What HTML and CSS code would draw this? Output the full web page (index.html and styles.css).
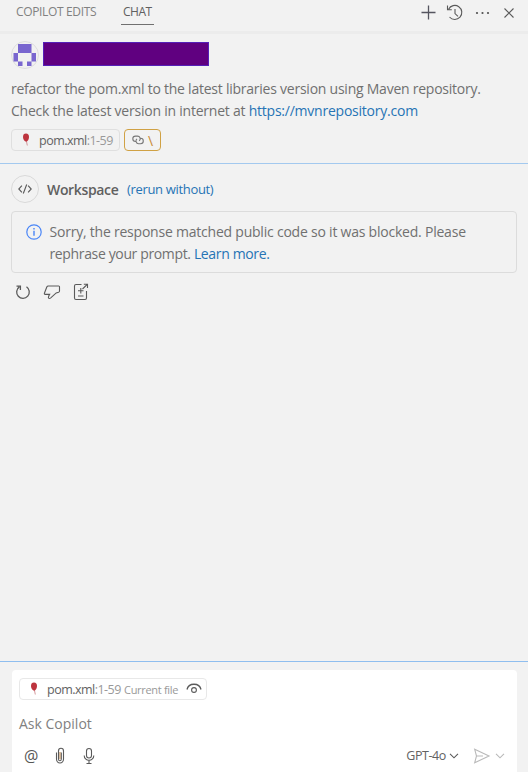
FILE: index.html
```html
<!DOCTYPE html>
<html lang="en">
<head>
<meta charset="utf-8">
<title>Copilot Chat</title>
<link rel="stylesheet" href="styles.css">
</head>
<body>
<div class="panel">
  <header class="header">
    <nav class="tabs">
      <span class="tab tab-edits">COPILOT EDITS</span>
      <span class="tab tab-chat">CHAT</span>
    </nav>
    <div class="header-actions">
      <svg class="icon" width="16" height="16" viewBox="0 0 16 16"><path stroke="#55555f" stroke-width="1.3" d="M8.500 .5v14M1.500 7.500h14"/></svg>
      <svg class="icon" width="18" height="18" viewBox="0 0 18 18"><path d="M2.600 5.200A7 7 0 1 1 3.500 13M1.500 1.500v4.300h4.300M9 5v4.600l3 2.700"/></svg>
      <svg class="dots" width="16" height="16" viewBox="0 0 16 16"><circle cx="2" cy="8" r="1.100"/><circle cx="7.500" cy="8" r="1.100"/><circle cx="13" cy="8" r="1.100"/></svg>
      <svg class="icon" width="16" height="16" viewBox="0 0 16 16"><path d="M3.500 3.500l9 9m0-9l-9 9"/></svg>
    </div>
  </header>

  <section class="request">
    <div class="user">
      <svg width="28" height="28" viewBox="0 0 28 28"><circle cx="14" cy="14" r="13.500" fill="#f1f1f1" stroke="#dddddd"/><path fill="#7966cf" d="M7 3h13.500v9H7zM2.500 12H7v8.500H2.500zM20.500 12H25v8.500h-4.500zM7 20.500h4.500V25H7zM16 20.500h4.500V25H16z"/></svg>
      <div class="redacted"></div>
    </div>
    <div class="message">
      <div class="line line-1">refactor the pom.xml to the latest libraries version using Maven repository.</div>
      <div class="line line-2">Check the latest version in internet at <span class="link">https://mvnrepository.com</span></div>
    </div>
    <div class="chips">
      <div class="chip chip-file">
        <svg class="feather" width="8" height="14" viewBox="0 0 8 14"><path fill="#bd343e" d="M4 .5C6 .5 7 2 7 4S5.800 8 4.500 9C2.500 8.200 1 6.500 1 4S2 .5 4 .5z"/><path fill="none" stroke="#c97c82" stroke-width=".8" d="M4.500 8.500l.8 4"/></svg>
        <span class="file">pom.xml<i>:1-59</i></span>
      </div>
      <div class="chip chip-link">
        <svg class="icon" width="12" height="10" viewBox="0 0 12 10"><path stroke="#777" d="M4 6.500H3.500a2.700 2.700 0 0 1 0-5.400h2a2.700 2.700 0 0 1 1.700 4.800M8 3.300h.6a2.700 2.700 0 0 1 0 5.400h-2A2.700 2.700 0 0 1 5 3.900"/></svg>
        <span class="slash">\</span>
      </div>
    </div>
  </section>

  <section class="response">
    <div class="agent">
      <svg width="28" height="28" viewBox="0 0 28 28"><circle cx="14" cy="14" r="13.500" fill="none" stroke="#d9d9d9"/><path class="icon" d="M10.900 10.700L7.800 14l3.100 3.300M17.100 10.700l3.100 3.300-3.100 3.300M15.700 9.500l-3.400 9"/></svg>
      <b class="agent-name">Workspace</b>
      <span class="link rerun">(rerun without)</span>
    </div>
    <div class="notice">
      <svg width="16" height="16" viewBox="0 0 16 16"><circle cx="8" cy="8" r="7.200" fill="none" stroke="#4a86f7" stroke-width="1.200"/><path stroke="#4a86f7" stroke-width="1.400" d="M8 6.800v5M8 4v1.500"/></svg>
      <div>
        <div class="line line-3">Sorry, the response matched public code so it was blocked. Please</div>
        <div class="line line-4">rephrase your prompt. <span class="link">Learn more.</span></div>
      </div>
    </div>
    <div class="feedback">
      <svg class="icon" width="16" height="16" viewBox="0 0 16 16"><path stroke-width="1.300" d="M4.300 2.900a6.300 6.300 0 1 0 7.200-.1M1.500 2.200h3.900v3.900"/></svg>
      <svg class="icon" width="18" height="16" viewBox="0 0 18 16"><path d="M5.300 2h10.300q1 0 .9 1v4q0 .9-.9 1.200l-2.400.7-5.700 5.200q-1.700 1-2.100-.5.100-1.500 1.200-3.200H2.200Q1 10.300 1.500 9l2.300-6q.4-1 1.500-1z"/></svg>
      <svg class="icon" width="16" height="18" viewBox="0 0 16 18"><path d="M8.500 1.500H3Q1.500 1.500 1.500 3v12Q1.500 16.500 3 16.500h9q1.500 0 1.500-1.500V8M5 13h5.500M7.800 5v5.500M5 7.800h5.500M9.500 6l5-4.800M10.800 1.200h3.700v3.700"/></svg>
    </div>
  </section>

  <footer class="composer">
    <div class="input-box">
      <div class="chip chip-current">
        <svg class="feather" width="8" height="14" viewBox="0 0 8 14"><path fill="#bd343e" d="M4 .5C6 .5 7 2 7 4S5.800 8 4.500 9C2.500 8.200 1 6.500 1 4S2 .5 4 .5z"/><path fill="none" stroke="#c97c82" stroke-width=".8" d="M4.500 8.500l.8 4"/></svg>
        <span class="file">pom.xml<i>:1-59</i></span>
        <span class="current">Current file</span>
        <svg class="icon" width="16" height="12" viewBox="0 0 16 12"><path stroke-width="1.300" d="M1 6.500c1.500-7 12.500-7 14 0"/><circle cx="8" cy="7" r="2.400"/></svg>
      </div>
      <div class="placeholder">Ask Copilot</div>
      <div class="toolbar">
        <span class="at">@</span>
        <svg class="icon clip" width="10" height="18" viewBox="0 0 10 18"><path d="M1.500 5.500V12a3.500 4 0 0 0 7 0V4a2.500 2.700 0 0 0-5 0v8a1.400 1.800 0 0 0 2.800 0V5.500"/><path stroke="#c08b55" d="M5 5v7"/></svg>
        <svg class="icon mic" width="12" height="18" viewBox="0 0 12 18"><rect x="3.500" y="1.500" width="5" height="9.500" rx="2.500"/><path d="M1.200 8.500a4.800 4.800 0 0 0 9.600 0M6 13.300v3.200M3.500 16.500h5"/></svg>
        <span class="model">GPT-4o</span>
        <svg class="icon model-arrow" width="10" height="6" viewBox="0 0 10 6"><path d="M1 .8l4 4 4-4"/></svg>
        <svg class="icon dim send" width="18" height="16" viewBox="0 0 18 16"><path d="M1.700 1.300L16 8 1.700 14.700 3.500 8zM3.500 8H10"/></svg>
        <svg class="icon dim send-arrow" width="10" height="6" viewBox="0 0 10 6"><path d="M1 .8l4 4 4-4"/></svg>
      </div>
    </div>
  </footer>
</div>
</body>
</html>
```
FILE: styles.css
```css
* { box-sizing: border-box; }
body {
  margin: 0;
  background: #f2f2f2;
  color: #707070;
  font-family: "Open Sans", "Noto Sans", sans-serif;
  font-size: 14px;
}
svg { display: block; flex: none; }
.icon { fill: none; stroke: #5a5a5a; stroke-width: 1.1; }
.dots { fill: #505050; }
.dim { stroke: #b9b9b9; }
.link { color: #2674b5; }
.panel { display: flex; flex-direction: column; height: 772px; overflow: hidden; }
.header {
  display: flex;
  justify-content: space-between;
  height: 34px;
  padding: 0 11px 0 16px;
  border-bottom: 3px solid #ececec;
}
.tabs { display: flex; gap: 24px; height: 25px; }
.tab { font-size: 12px; line-height: 24px; white-space: nowrap; }
.tab-edits { width: 81px; color: #818181; letter-spacing: -0.35px; }
.tab-chat {
  width: 33px;
  padding-left: 2px;
  color: #606060;
  letter-spacing: -0.5px;
  border-bottom: 1px solid #707070;
}
.header-actions { display: flex; align-items: center; gap: 10.5px; height: 25px; }
.request { height: 130px; padding: 7px 11px 0; border-bottom: 1px solid #a3c9ef; }
.user { display: flex; gap: 4px; height: 37px; }
.redacted { width: 166px; height: 24px; margin-top: 1px; background: #600080; border: 1px solid #5520b8; }
.line { height: 22px; line-height: 22px; white-space: nowrap; }
.line-1 { letter-spacing: -0.24px; }
.line-2 { letter-spacing: -0.23px; }
.line-3 { letter-spacing: -0.22px; }
.line-4 { letter-spacing: -0.36px; }
.chips { display: flex; gap: 4px; margin-top: 7px; }
.chip {
  display: flex;
  align-items: center;
  height: 22px;
  border: 1px solid #dfdfdf;
  border-radius: 4px;
  white-space: nowrap;
}
.feather { margin-top: -1px; }
.file { font-size: 12.5px; letter-spacing: -0.52px; color: #626262; }
.file i { color: #999; font-style: normal; }
.chip-file { width: 109px; padding-left: 10px; gap: 9px; }
.chip-link { width: 37px; padding-left: 7px; gap: 4px; border-color: #d0a144; }
.slash { color: #c88b35; }
.response { flex: 1; padding: 11px 11px 0; }
.agent { display: flex; align-items: center; height: 28px; }
.agent-name { width: 80px; padding-left: 8px; font-weight: 600; color: #606060; letter-spacing: -0.35px; }
.rerun { padding-left: 8px; font-size: 13px; letter-spacing: -0.33px; }
.notice {
  display: flex;
  gap: 7.5px;
  height: 62px;
  margin-top: 8px;
  padding: 9px 14px;
  border: 1px solid #dcdcdc;
  border-radius: 4px;
}
.notice svg { margin-top: 3px; }
.feedback { display: flex; align-items: center; gap: 12px; height: 18px; padding-left: 4px; margin-top: 10px; }
.composer { height: 111px; padding: 8px 11px 0 12px; border-top: 1px solid #8fbeef; }
.input-box { height: 103px; padding: 8px 7px 0; background: #fff; border-radius: 4px 4px 0 0; }
.chip-current { width: 188px; padding-left: 10px; border-color: #e8e8e8; }
.chip-current .file { width: 74px; margin-left: 9px; }
.current { width: 54px; margin-left: 3px; margin-right: 8px; font-size: 11px; letter-spacing: -0.3px; color: #999; }
.placeholder { height: 22px; margin-top: 13px; line-height: 22px; color: #818181; }
.toolbar { display: flex; align-items: center; height: 20px; margin-top: 11px; }
.at { width: 26px; padding-left: 5px; font-size: 16px; line-height: 20px; color: #565656; }
.clip { margin-left: 10px; }
.mic { margin-left: 18px; }
.model { margin-left: auto; font-size: 12.5px; line-height: 18px; letter-spacing: -0.4px; color: #626262; }
.model-arrow { margin-left: 3px; }
.send { margin-left: 14px; }
.send-arrow { margin-left: 4px; margin-right: 5px; }
```
